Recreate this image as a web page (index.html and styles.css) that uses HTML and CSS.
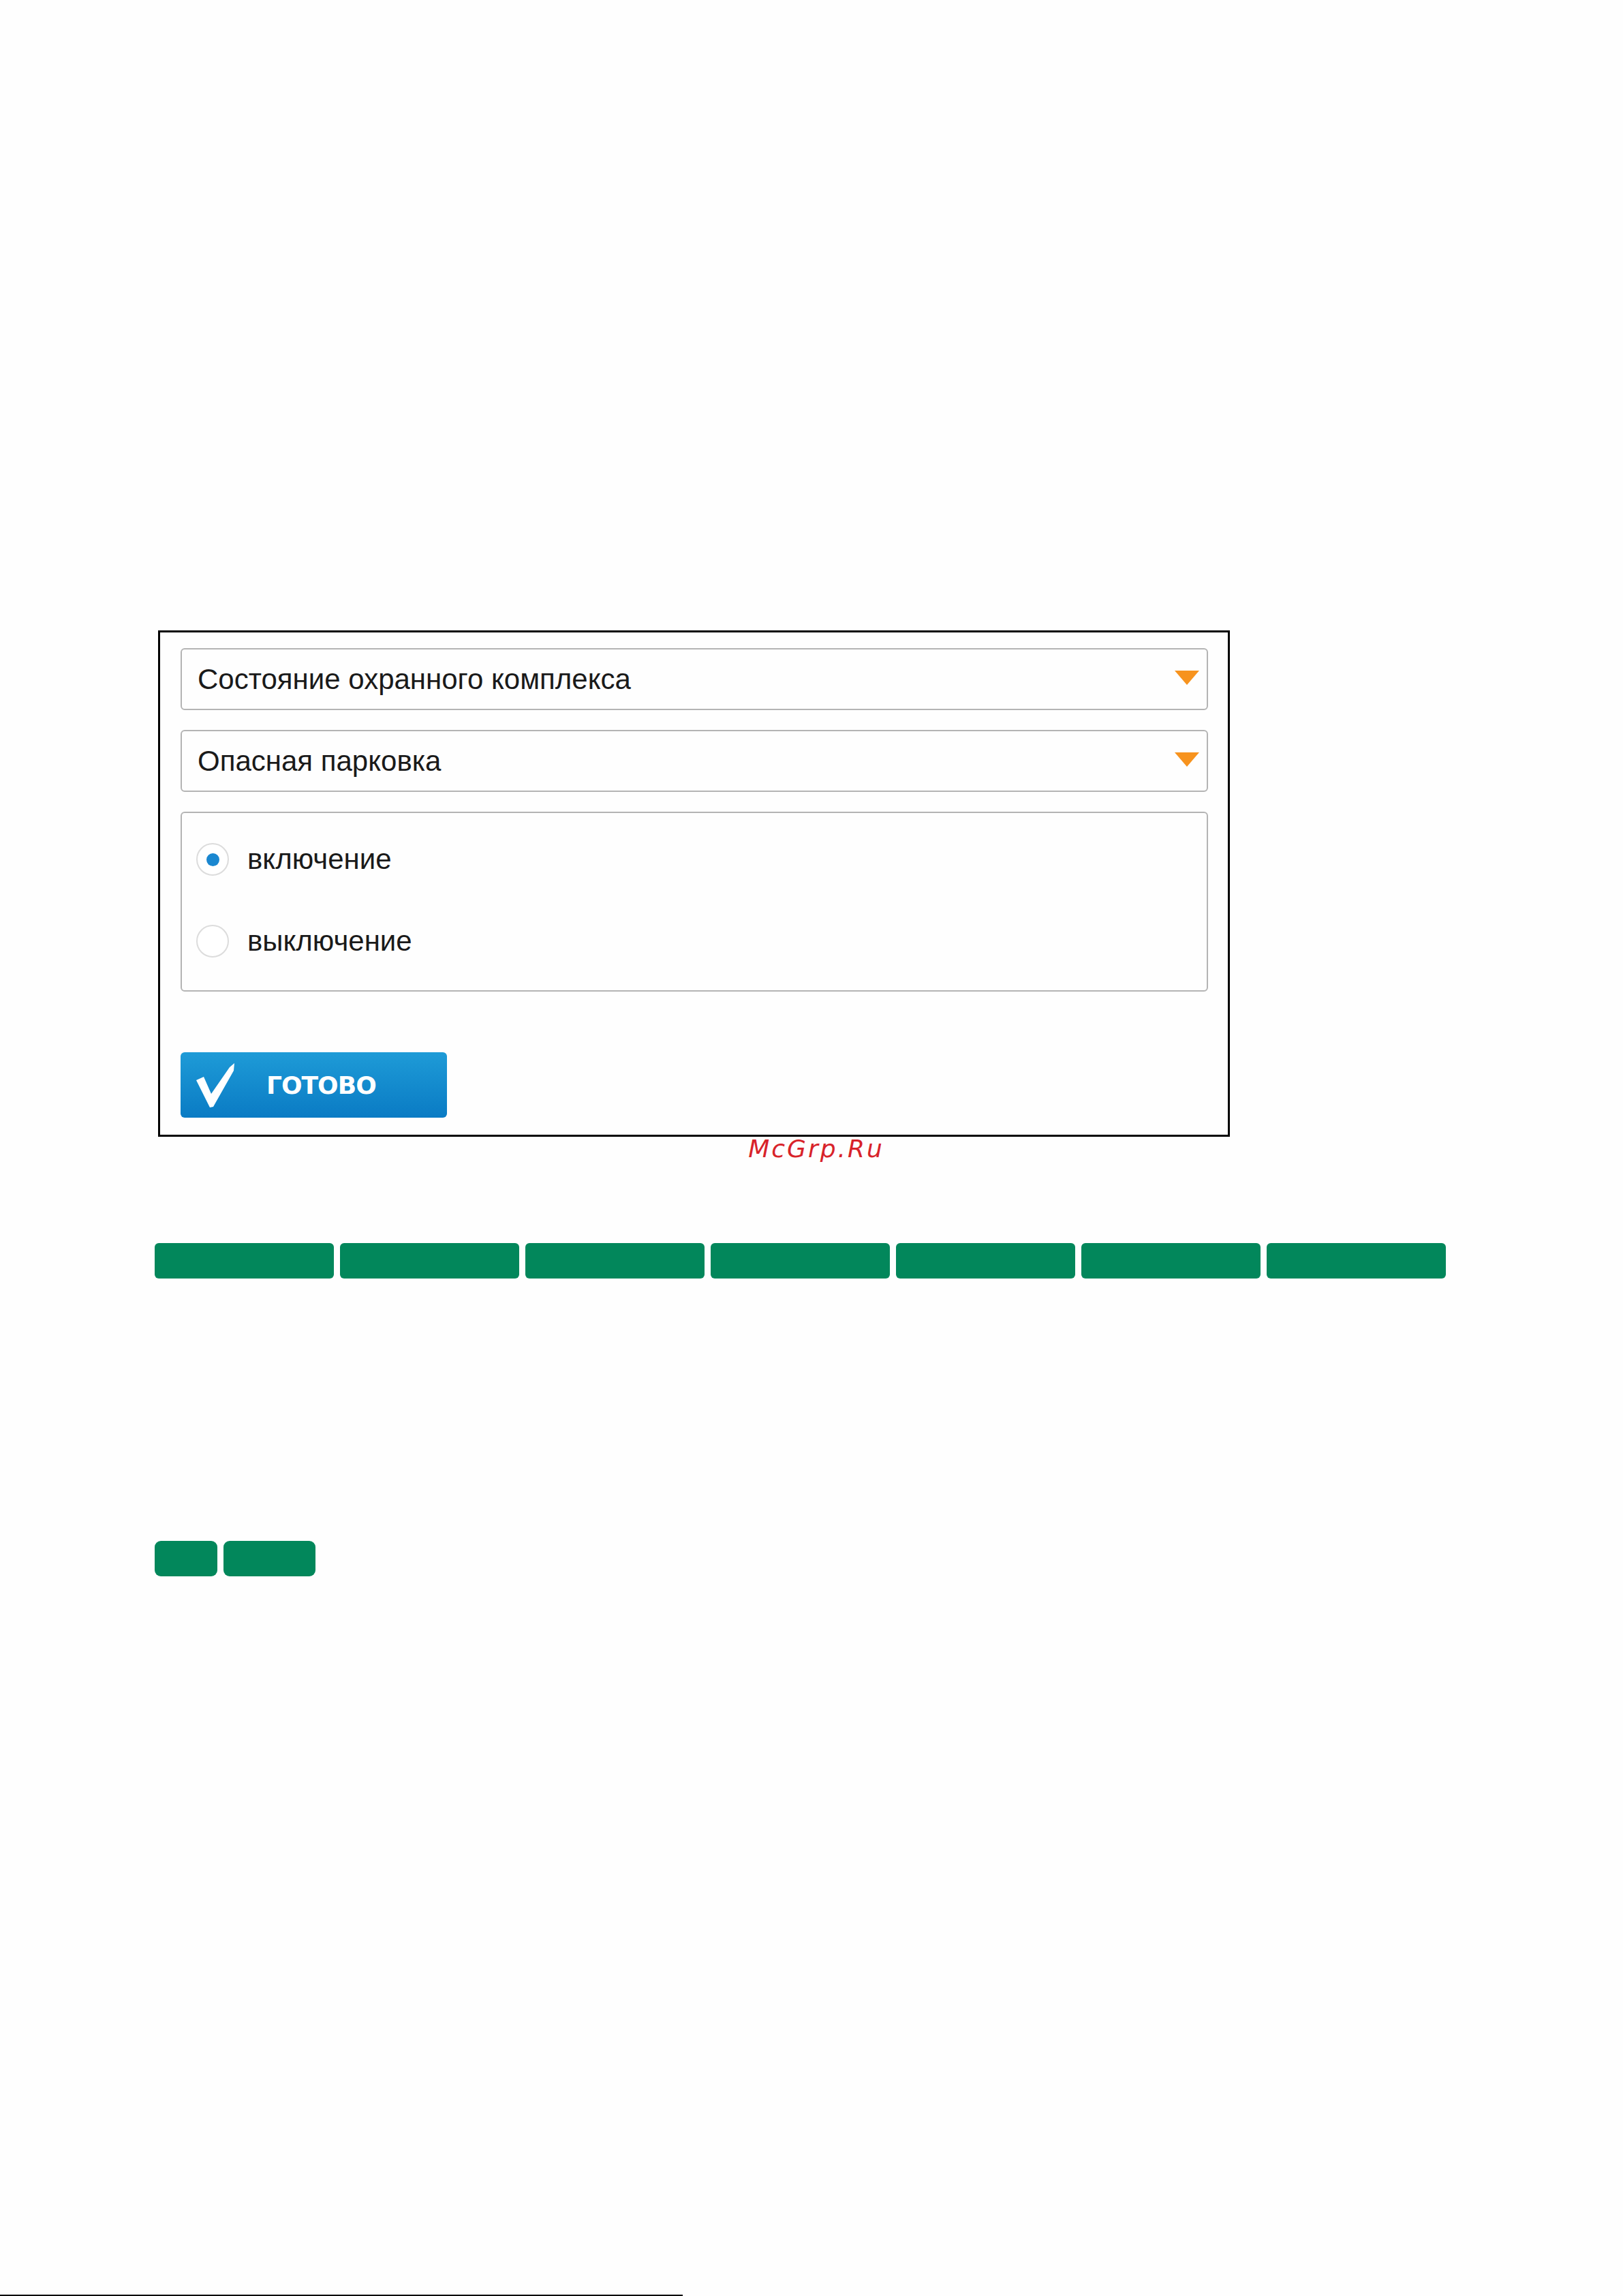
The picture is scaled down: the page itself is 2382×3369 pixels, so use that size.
FILE: index.html
```html
<!DOCTYPE html>
<html lang="ru">
<head>
    <meta charset="UTF-8">
    <meta name="viewport" content="width=device-width, initial-scale=1.0">
    <title>Опасная парковка</title>
    <link rel="stylesheet" href="styles.css">
</head>
<body>
    <div class="shot">
        <div class="select">
            <span>Состояние охранного комплекса</span>
            <i class="arrow"></i>
        </div>
        <div class="select">
            <span>Опасная парковка</span>
            <i class="arrow"></i>
        </div>
        <div class="options">
            <label class="option">
                <span class="radio checked"></span>
                <span>включение</span>
            </label>
            <label class="option">
                <span class="radio"></span>
                <span>выключение</span>
            </label>
        </div>
        <button class="done">
            <svg class="tick" width="58" height="66" viewBox="0 0 58 66">
                <polygon points="1,25 12,20 23,45 50,6 57,0 56,11 26,64 21,65" fill="#fff"/>
            </svg>
            <span>ГОТОВО</span>
        </button>
    </div>
    <div class="watermark">McGrp.Ru</div>

    <div class="bars">
        <div class="bar"></div>
        <div class="bar"></div>
        <div class="bar"></div>
        <div class="bar"></div>
        <div class="bar"></div>
        <div class="bar"></div>
        <div class="bar"></div>
    </div>

    <div class="bars bars-small">
        <div class="bar bar-a"></div>
        <div class="bar bar-b"></div>
    </div>

    <div class="footer-line"></div>
</body>
</html>
```

FILE: styles.css
```css
body {
    margin: 0;
    min-height: 100vh;
    display: flex;
    flex-direction: column;
    background: #fefefe;
    font-family: 'Liberation Sans', Arial, sans-serif;
    color: #1a1a1a;
}

.shot {
    box-sizing: border-box;
    width: 1573px;
    height: 743px;
    margin: 925px 0 0 232px;
    padding: 23px 29px 24px 30px;
    border: 3px solid #000;
    display: flex;
    flex-direction: column;
    gap: 29px;
}

.select {
    box-sizing: border-box;
    height: 91px;
    border: 2px solid #b4b4b4;
    border-radius: 6px;
    padding: 0 11px 0 23px;
    display: flex;
    align-items: center;
    justify-content: space-between;
    font-size: 42px;
}

.arrow {
    width: 0;
    height: 0;
    border-left: 18px solid transparent;
    border-right: 18px solid transparent;
    border-top: 21px solid #f7931e;
    margin-top: -5px;
}

.options {
    box-sizing: border-box;
    height: 264px;
    border: 2px solid #b4b4b4;
    border-radius: 6px;
    padding: 8px 0 12px 21px;
    display: flex;
    flex-direction: column;
}

.option {
    height: 120px;
    display: flex;
    align-items: center;
    gap: 27px;
    font-size: 42px;
}

.radio {
    box-sizing: border-box;
    width: 48px;
    height: 48px;
    border: 2px solid #dcdcdc;
    border-radius: 50%;
    background: #fff;
    display: flex;
    align-items: center;
    justify-content: center;
}

.radio.checked::after {
    content: '';
    width: 19px;
    height: 19px;
    border-radius: 50%;
    background: #1a87d0;
}

.done {
    margin-top: 60px;
    width: 391px;
    height: 96px;
    padding: 0 0 0 22px;
    border: none;
    border-radius: 6px;
    background: linear-gradient(#1e9bd7, #0a7bc4);
    display: flex;
    align-items: center;
    gap: 46px;
    color: #fff;
    font-family: 'DejaVu Sans', sans-serif;
    font-weight: bold;
    font-size: 36px;
    letter-spacing: -1px;
}

.tick {
    margin-top: 2px;
}

.watermark {
    padding-left: 14px;
    text-align: center;
    font-family: 'DejaVu Sans', sans-serif;
    font-style: italic;
    font-size: 36px;
    line-height: 36px;
    letter-spacing: 3px;
    color: #d8232a;
}

.bars {
    display: flex;
    gap: 9px;
    margin: 120px 0 0 227px;
}

.bar {
    width: 263px;
    height: 52px;
    border-radius: 6px;
    background: #02875b;
}

.bars-small {
    margin-top: 385px;
}

.bars-small .bar {
    border-radius: 9px;
}

.bar-a {
    width: 92px !important;
}

.bar-b {
    width: 135px !important;
}

.footer-line {
    margin-top: auto;
    width: 1002px;
    height: 2px;
    background: #000;
}
```
